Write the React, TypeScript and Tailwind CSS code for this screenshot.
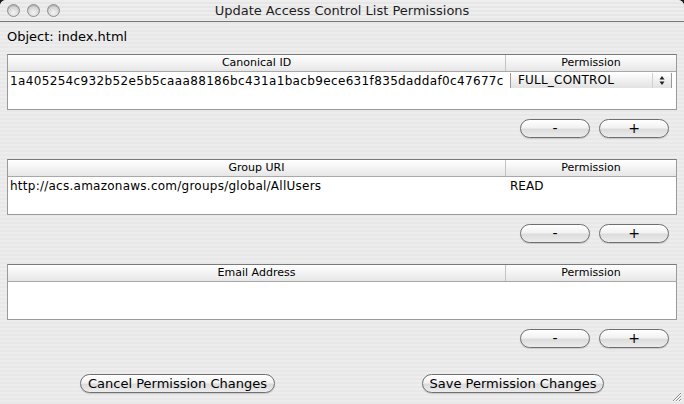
import React from "react";

const font = { fontFamily: '"DejaVu Sans", "Liberation Sans", sans-serif' };

function Light() {
  return (
    <div className="w-[13px] h-[13px] rounded-full border border-[#8e8e8e] bg-[radial-gradient(circle_at_50%_70%,#f4f4f4_0%,#d4d4d4_60%,#b8b8b8_100%)] shadow-[inset_0_1px_1px_rgba(0,0,0,0.15)]" />
  );
}

function Pill({ children, w, className = "" }: { children: React.ReactNode; w: string; className?: string }) {
  return (
    <div
      className={`${w} h-[19px] rounded-full border border-[#6f6f6f] bg-[linear-gradient(180deg,#ffffff_0%,#f2f2f2_45%,#dcdcdc_55%,#ececec_100%)] shadow-[0_1px_1px_rgba(0,0,0,0.15)] flex items-center justify-center text-[13px] text-black leading-none ${className}`}
    >
      {children}
    </div>
  );
}

function Table({
  left,
  right,
  children,
}: {
  left: string;
  right: string;
  children?: React.ReactNode;
}) {
  return (
    <div className="h-[56px] border border-[#9a9a9a] border-t-[#7a7a7a] bg-white flex flex-col">
      <div className="h-[17px] flex border-b border-[#a8a8a8] bg-[linear-gradient(180deg,#ffffff_0%,#f3f3f3_50%,#e6e6e6_100%)] text-[11px] leading-[16px] text-black">
        <div className="w-[498px] border-r border-[#c4c4c4] text-center">{left}</div>
        <div className="flex-1 text-center">{right}</div>
      </div>
      <div className="flex-1 relative">{children}</div>
    </div>
  );
}

function PlusMinus() {
  return (
    <div className="mt-[9px] flex justify-end gap-[9px] pr-[8px]">
      <Pill w="w-[70px]">
        <span className="text-[14px] -mt-[2px]">-</span>
      </Pill>
      <Pill w="w-[70px]">
        <span className="text-[14px] -mt-[1px]">+</span>
      </Pill>
    </div>
  );
}

export default function App() {
  return (
    <div
      style={font}
      className="w-[684px] h-[404px] overflow-hidden bg-[#1a1a1a] relative"
    >
      <div className="w-full h-full rounded-t-[6px] overflow-hidden flex flex-col bg-[repeating-linear-gradient(180deg,#ededed_0px,#ededed_2px,#e8e8e8_2px,#e8e8e8_4px)]">
        {/* Title bar */}
        <div className="h-[22px] shrink-0 relative flex items-center border-b border-[#777] bg-[repeating-linear-gradient(180deg,#eeeeee_0px,#eeeeee_2px,#e6e6e6_2px,#e6e6e6_4px)]">
          <div className="flex gap-[7px] pl-[7px]">
            <Light />
            <Light />
            <Light />
          </div>
          <div className="absolute inset-0 flex items-center justify-center text-[13px] text-[#1e1e1e]">
            Update Access Control List Permissions
          </div>
        </div>

        {/* Content */}
        <div className="flex-1 flex flex-col px-[7px]">
          <div className="mt-[7px] h-[16px] text-[13px] leading-[16px] text-black">Object: index.html</div>

          <div className="mt-[9px]">
            <Table left="Canonical ID" right="Permission">
              <div className="flex h-[17px] items-center">
                <div className="w-[499px] pl-[2px] text-[12px] leading-[16px] tracking-[0.35px] text-black whitespace-nowrap overflow-hidden">
                  1a405254c932b52e5b5caaa88186bc431a1bacb9ece631f835daddaf0c47677c
                </div>
                <div className="flex-1 pl-[3px] pr-[4px] h-[16px]">
                  <div className="h-[15px] flex items-center border-l border-r border-[#9a9a9a] bg-[linear-gradient(180deg,#ffffff_0%,#f0f0f0_50%,#e2e2e2_100%)]">
                    <span className="pl-[7px] text-[12px] leading-none tracking-[0.2px] text-black flex-1">FULL_CONTROL</span>
                    <div className="h-full w-[19px] border-l border-[#d0d0d0] flex items-center justify-center">
                      <svg width="8" height="11" viewBox="0 0 8 11">
                        <path d="M4 1 L6.5 4.5 L1.5 4.5 Z" fill="#222" />
                        <path d="M4 10 L6.5 6.5 L1.5 6.5 Z" fill="#222" />
                      </svg>
                    </div>
                  </div>
                </div>
              </div>
            </Table>
          </div>
          <PlusMinus />

          <div className="mt-[21px]">
            <Table left="Group URI" right="Permission">
              <div className="flex h-[17px] items-center text-[12px] leading-[16px] text-black">
                <div className="w-[499px] pl-[2px] tracking-[0.25px] whitespace-nowrap">http://acs.amazonaws.com/groups/global/AllUsers</div>
                <div className="flex-1 pl-[3px]">READ</div>
              </div>
            </Table>
          </div>
          <PlusMinus />

          <div className="mt-[21px]">
            <Table left="Email Address" right="Permission" />
          </div>
          <PlusMinus />

          <div className="mt-[26px] flex">
            <Pill w="w-[195px]" className="ml-[73px]">Cancel Permission Changes</Pill>
            <Pill w="w-[182px]" className="ml-[147px]">Save Permission Changes</Pill>
          </div>
        </div>

        {/* Resize grip */}
        <svg className="absolute right-[2px] bottom-[2px]" width="12" height="12" viewBox="0 0 12 12">
          <path d="M11 3 L3 11 M11 6 L6 11 M11 9 L9 11" stroke="#8a8a8a" strokeWidth="1" />
          <path d="M11 4 L4 11 M11 7 L7 11 M11 10 L10 11" stroke="#ffffff" strokeWidth="1" />
        </svg>
      </div>
    </div>
  );
}
